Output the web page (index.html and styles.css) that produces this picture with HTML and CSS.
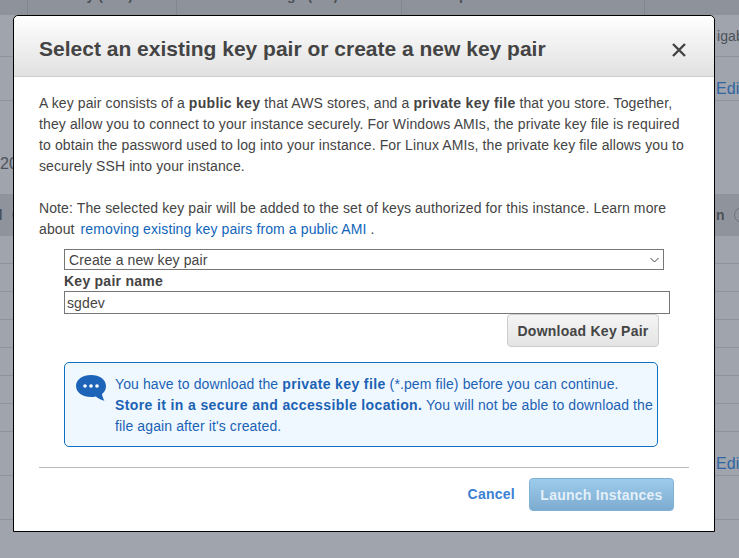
FILE: index.html
```html
<!DOCTYPE html>
<html lang="en">
<head>
    <meta charset="UTF-8">
    <meta name="viewport" content="width=device-width, initial-scale=1.0">
    <title>Select a key pair</title>
    <link rel="stylesheet" href="styles.css">
</head>
<body>
    <!-- table behind the overlay, only the edges show -->
    <div class="backdrop">
        <div class="bg-head">
            <span class="bg-cell cell-a"></span>
            <span class="bg-cell cell-b"><i>Memory (GiB)</i></span>
            <span class="bg-cell cell-c"><i>Instance Storage (GB)</i></span>
            <span class="bg-cell cell-d"><i>EBS-Optimized Available</i></span>
        </div>
        <div class="bg-row row-a"><span></span><span class="bg-right">Gigabit</span></div>
        <div class="bg-row row-b"><span></span><a class="bg-right">Edit</a></div>
        <div class="bg-row row-c"><span class="bg-left">20</span></div>
        <div class="bg-row row-band"><span class="bg-left bg-cut"><b>d</b><em class="bg-circle"></em></span><span class="bg-right"><b>n</b><em class="bg-circle"></em></span></div>
        <div class="bg-row row-s"></div>
        <div class="bg-row row-s"></div>
        <div class="bg-row row-s"></div>
        <div class="bg-row row-s"></div>
        <div class="bg-row row-s"></div>
        <div class="bg-row row-s"></div>
        <div class="bg-row row-s"></div>
        <div class="bg-row row-b"><span></span><a class="bg-right">Edit</a></div>
        <div class="bg-row row-e"></div>
    </div>

    <div class="modal">
        <div class="modal-header">
            <h1>Select an existing key pair or create a new key pair</h1>
            <svg class="close-icon" width="14" height="14" viewBox="0 0 14 14"><path d="M1 1 L13 13 M13 1 L1 13" stroke="#444" stroke-width="2.4" fill="none"/></svg>
        </div>
        <div class="modal-body">
            <p>A key pair consists of a <b>public key</b> that AWS stores, and a <b>private key file</b> that you store. Together, they allow you to connect to your instance securely. For Windows AMIs, the private key file is required to obtain the password used to log into your instance. For Linux AMIs, the private key file allows you to securely SSH into your instance.</p>
            <p class="note">Note: The selected key pair will be added to the set of keys authorized for this instance. Learn more about <a href="#">removing existing key pairs from a public AMI</a> .</p>

            <div class="key-form">
                <div class="select-box">
                    <span>Create a new key pair</span>
                    <svg width="9" height="6" viewBox="0 0 9 6"><path d="M0.5 1 L4.5 5 L8.5 1" stroke="#444" stroke-width="1" fill="none"/></svg>
                </div>
                <label>Key pair name</label>
                <input type="text" value="sgdev">
                <div class="download-row">
                    <button class="btn-download">Download Key Pair</button>
                </div>
                <div class="info-box">
                    <svg class="info-icon" width="31" height="28" viewBox="0 0 31 28">
                        <path d="M15 1 C23.5 1 30 5.6 30 12 C30 15.6 28.4 18.2 26 20 C26.2 22.6 27.4 24.6 28.4 26.8 C25 26 21.8 24.4 19.8 22.5 C18.4 22.9 16.8 23 15 23 C6.6 23 0 18.4 0 12 C0 5.6 6.6 1 15 1 Z" fill="#1d64b8"/>
                        <circle cx="9" cy="12" r="1.8" fill="#fff"/>
                        <circle cx="15" cy="12" r="1.8" fill="#fff"/>
                        <circle cx="21" cy="12" r="1.8" fill="#fff"/>
                    </svg>
                    <div class="info-text">You have to download the <b>private key file</b> (*.pem file) before you can continue. <b>Store it in a secure and accessible location.</b> You will not be able to download the file again after it's created.</div>
                </div>
            </div>
        </div>
        <div class="modal-footer">
            <a href="#" class="cancel">Cancel</a>
            <button class="btn-launch">Launch Instances</button>
        </div>
    </div>
</body>
</html>
```

FILE: styles.css
```css
html, body {
    margin: 0;
    height: 100%;
}
body {
    font-family: "Liberation Sans", Arial, sans-serif;
    font-size: 14px;
    letter-spacing: 0.11px;
    color: #444;
    background-color: #a0a4ac;
    overflow: hidden;
}
.backdrop {
    height: 100%;
    font-size: 16px;
    color: #4d5158;
}
.bg-head {
    display: flex;
    height: 15px;
    background-color: #8e939b;
    font-size: 14px;
    font-weight: bold;
    line-height: 16px;
    overflow: hidden;
}
.bg-cell {
    box-sizing: border-box;
    border-right: 1px solid #82878f;
    white-space: nowrap;
    overflow: hidden;
}
.bg-cell i {
    display: block;
    font-style: normal;
    margin: -13px 0 0 12px;
}
.cell-a { width: 28px; }
.cell-b { width: 149px; }
.cell-c { width: 225px; }
.cell-d { width: 243px; }
.bg-row {
    box-sizing: border-box;
    display: flex;
    justify-content: space-between;
    align-items: center;
    border-bottom: 1px solid #8e929a;
    overflow: hidden;
}
.bg-left {
    width: 13px;
    overflow: hidden;
    white-space: nowrap;
}
.bg-cut {
    text-indent: -6px;
}
.bg-right {
    width: 23px;
    margin-left: auto;
    overflow: hidden;
    white-space: nowrap;
}
.bg-row a {
    color: #2f66a3;
}
.bg-circle {
    display: inline-block;
    box-sizing: border-box;
    width: 16px;
    height: 16px;
    margin-left: 9px;
    vertical-align: -3px;
    border: 1px solid #70747b;
    border-radius: 50%;
}
.row-a {
    height: 42px;
}
.row-a .bg-right {
    text-indent: -10px;
    font-size: 14px;
}
.row-b {
    height: 44px;
    align-items: flex-end;
    padding-bottom: 2px;
}
.row-c {
    height: 93px;
    align-items: flex-end;
    padding-bottom: 21px;
    border-bottom: 0;
}
.row-band {
    height: 42px;
    background-color: #8f949c;
    font-size: 14px;
    border-bottom: 0;
}
.row-s { height: 28px; }
.row-e { height: 44px; }
.modal {
    position: absolute;
    left: 13px;
    top: 15px;
    width: 700px;
    height: 515px;
    border: 1px solid #000;
    border-radius: 5px 5px 0 0;
    background-color: #fff;
    display: flex;
    flex-direction: column;
}
.modal-header {
    height: 54px;
    padding: 6px 28px 0 25px;
    border-bottom: 1px solid #ccc;
    border-radius: 5px 5px 0 0;
    background: linear-gradient(#fff, #e1e1e1);
    display: flex;
    align-items: center;
    justify-content: space-between;
}
.close-icon {
    margin-top: 1px;
}
h1 {
    margin: 0;
    font-size: 21px;
    font-weight: bold;
    letter-spacing: 0;
    color: #444;
}
.modal-body {
    padding: 16px 25px 0;
    flex: 1;
}
p {
    margin: 0;
    line-height: 21px;
}
.note {
    margin-top: 21px;
}
b, label, button, .cancel {
    letter-spacing: 0.25px;
}
p b {
    letter-spacing: 0.3px;
}
a {
    color: #1166bb;
    text-decoration: none;
}
.note a {
    margin-left: 2px;
}
.key-form {
    margin-left: 25px;
    margin-top: 9px;
}
.select-box {
    width: 590px;
    height: 19px;
    border: 1px solid #767676;
    padding: 0 4px;
    display: flex;
    align-items: center;
    justify-content: space-between;
    line-height: 21px;
}
.select-box span {
    margin-top: 1px;
}
label {
    display: block;
    font-weight: bold;
    height: 21px;
    line-height: 22px;
}
input {
    display: block;
    width: 602px;
    height: 21px;
    border: 1px solid #767676;
    padding: 0 0 0 2px;
    margin: 0;
    font-family: inherit;
    font-size: 14px;
    letter-spacing: inherit;
    color: #444;
}
.download-row {
    display: flex;
    justify-content: flex-end;
    width: 595px;
}
.btn-download {
    width: 152px;
    height: 33px;
    border: 1px solid #ccc;
    border-radius: 4px;
    background: linear-gradient(#f5f5f5, #e4e4e4);
    font-family: inherit;
    font-size: 14px;
    font-weight: bold;
    color: #444;
    padding: 0;
}
.info-box {
    box-sizing: border-box;
    margin-top: 15px;
    width: 594px;
    height: 85px;
    border: 1px solid #0f6fc0;
    border-radius: 5px;
    background-color: #f0f8ff;
    padding: 0 2px 0 11px;
    display: flex;
    gap: 8px;
}
.info-icon {
    margin-top: 11px;
    flex-shrink: 0;
}
.info-text {
    padding-top: 11px;
    line-height: 21px;
    color: #1b62b5;
}
.info-text b {
    letter-spacing: 0.38px;
}
.modal-footer {
    margin: 0 25px;
    height: 64px;
    border-top: 1px solid #bbb;
    display: flex;
    align-items: flex-start;
    justify-content: flex-end;
    gap: 14px;
    padding: 10px 15px 0 0;
    box-sizing: border-box;
}
.cancel {
    font-weight: bold;
    color: #3b7fd4;
    line-height: 33px;
}
.btn-launch {
    width: 145px;
    height: 33px;
    border: 1px solid #7fb0d6;
    border-radius: 4px;
    background: linear-gradient(#9ccbeb, #7dacd1);
    font-family: inherit;
    font-size: 14px;
    font-weight: bold;
    color: #e4f0f8;
    padding: 0;
}
```
